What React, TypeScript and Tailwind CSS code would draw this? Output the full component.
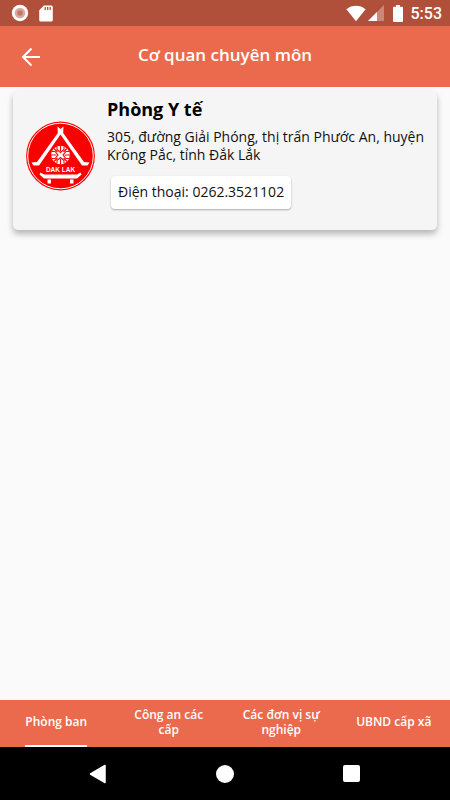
import { useState } from 'react';

const tabs = ['Phòng ban', 'Công an các cấp', 'Các đơn vị sự nghiệp', 'UBND cấp xã'];

function StatusBar() {
  return (
    <div className="flex h-[26px] shrink-0 items-center justify-between bg-[#b0503a] pr-2 pl-[11px] text-white">
      <div className="flex items-center gap-[10px]">
        <svg width="18" height="18" viewBox="0 0 18 18" aria-hidden="true">
          <circle cx="9" cy="9" r="8.2" fill="#fff" />
          <circle cx="9" cy="9" r="5.3" fill="#dba99d" />
          <circle cx="9" cy="9" r="2.8" fill="#c47868" />
        </svg>
        <svg width="14" height="17" viewBox="0 0 14 17" aria-hidden="true">
          <path d="M5 .5h7.3A1.5 1.5 0 0 1 13.8 2v13a1.5 1.5 0 0 1-1.5 1.5H1.7A1.5 1.5 0 0 1 .2 15V5.2z" fill="#fff" />
          <path d="M6.2 2v3M8.7 2v3M11.2 2v3" stroke="#b0503a" strokeWidth="1.3" />
        </svg>
      </div>
      <div className="flex items-center">
        <svg width="20" height="17" viewBox="0 0 20 17" aria-hidden="true">
          <path d="M.4 4.2C6 -.4 14 -.4 19.6 4.2L10 16.3z" fill="#fff" />
        </svg>
        <svg className="ml-[2px]" width="16" height="16" viewBox="0 0 16 16" aria-hidden="true">
          <path d="M0 16L16 0v16z" fill="#fff" fillOpacity=".32" />
          <path d="M0 16l9-9v9z" fill="#fff" />
        </svg>
        <svg className="ml-[9px]" width="10" height="17" viewBox="0 0 10 17" aria-hidden="true">
          <path d="M3 0h4v1.800h2q1 0 1 1V16q0 1-1 1H1q-1 0-1-1V2.800q0-1 1-1h2z" fill="#fff" />
        </svg>
        <span className="ml-[8px] pt-[2px] font-[Roboto,sans-serif] text-[16px] leading-[18px] font-medium">5:53</span>
      </div>
    </div>
  );
}

function Emblem() {
  return (
    <svg className="shrink-0" width="70" height="70" viewBox="0 0 70 70" role="img" aria-label="Dak Lak">
      <circle cx="34.5" cy="35" r="34.4" fill="#fb0000" />
      <circle cx="34.5" cy="35" r="32.8" fill="none" stroke="#fff" strokeWidth="1" />
      <g fill="#fff">
        <path d="M31.5 5.500l3 2.500 3-2.500-.3 6.500L58 41l5.500.5-2 3H56L34.500 13.500 13 44.500H7.500l-2-3L11 41 31.800 12z" />
        <path d="M14.500 51.500l3.500 2h33l3.500-2 1 2-4.500 4H18l-4.500-4z" />
        <path d="M21.500 58.500h3.500v4h-3.500zM44 58.500h3.500v4H44z" />
        <circle cx="34.500" cy="34" r="9.300" />
      </g>
      <g fill="none" stroke="#fb0000" strokeWidth="1.100">
        <path d="M34.500 24.500v5.500M34.500 38v5.500M25 34h5.500M38.500 34H44M28 27.500l3.500 3.500M41 27.500L37.500 31M28 40.500l3.500-3.500M41 40.500L37.500 37" />
        <path d="M31 25.500v3l3.500 3 3.500-3v-3M31 42.500v-3l3.500-3 3.500 3v3M26 30.500h3l3 3.500-3 3.500h-3M43 30.500h-3L37 34l3 3.500h3" />
      </g>
      <text x="34.500" y="50.500" textAnchor="middle" fill="#fff" fontFamily="Liberation Sans, sans-serif" fontSize="6.500" fontWeight="700">DAK LAK</text>
    </svg>
  );
}

function AppHeader() {
  return (
    <header className="grid h-[61px] shrink-0 grid-cols-[62px_1fr_62px] items-center bg-[#eb6a4d] text-white">
      <button type="button" aria-label="Quay lại" className="flex h-full items-center justify-center">
        <svg width="20" height="20" viewBox="0 0 20 20" fill="none" stroke="currentColor" strokeWidth="2" aria-hidden="true">
          <path d="M10.500 1.500L2 10l8.500 8.500M2 10h17" />
        </svg>
      </button>
      <h1 className="pb-1 text-center text-[17px] leading-6 font-semibold">Cơ quan chuyên môn</h1>
    </header>
  );
}

export default function App() {
  const [active, setActive] = useState(0);
  return (
    <div className="flex h-screen flex-col bg-[#fafafa] font-['Open_Sans','Noto_Sans',sans-serif] text-[#111]">
      <StatusBar />
      <AppHeader />
      <main className="grow overflow-auto px-[13px] pt-[4px]">
        <article className="flex items-start gap-[11px] rounded-[5px] bg-[#f5f5f5] pr-2 pb-[21px] pl-[13px] shadow-[0_4px_6px_rgba(0,0,0,0.28)]">
          <div className="pt-[30px]">
            <Emblem />
          </div>
          <div className="min-w-0 grow pt-[6px]">
            <h2 className="text-[18px] leading-6 font-bold text-black">Phòng Y tế</h2>
            <p className="pt-[7px] text-[14px] leading-[18px]">305, đường Giải Phóng, thị trấn Phước An, huyện Krông Pắc, tỉnh Đắk Lắk</p>
            <button type="button" className="mt-3 ml-1 h-[33px] rounded-[4px] bg-white px-[7px] pb-[2px] text-[14px] leading-[18px] shadow-[0_1px_2px_rgba(0,0,0,0.3)]">
              Điện thoại: 0262.3521102
            </button>
          </div>
        </article>
      </main>
      <nav className="grid h-[47px] shrink-0 grid-cols-4 bg-[#eb6a4d] text-white">
        {tabs.map((tab, i) => (
          <button
            key={tab}
            type="button"
            aria-current={i === active ? 'page' : undefined}
            onClick={() => setActive(i)}
            className="flex justify-center text-[12px] leading-[15px] font-semibold"
          >
            <span className={`flex h-full max-w-[80px] items-center border-b-2 pb-[2px] ${i === active ? 'border-white' : 'border-transparent'}`}>{tab}</span>
          </button>
        ))}
      </nav>
      <div className="flex h-[53px] shrink-0 items-center justify-center gap-[109px] bg-black pr-[2px] text-white">
        <button type="button" aria-label="Trở về">
          <svg width="18" height="20" viewBox="0 0 18 20" aria-hidden="true">
            <path d="M16 1.500v17L1.500 10z" fill="#fff" stroke="#fff" strokeWidth="1.500" strokeLinejoin="round" />
          </svg>
        </button>
        <button type="button" aria-label="Màn hình chính" className="size-[18px] rounded-full bg-white" />
        <button type="button" aria-label="Ứng dụng gần đây" className="size-[17px] rounded-[2px] bg-white" />
      </div>
    </div>
  );
}
